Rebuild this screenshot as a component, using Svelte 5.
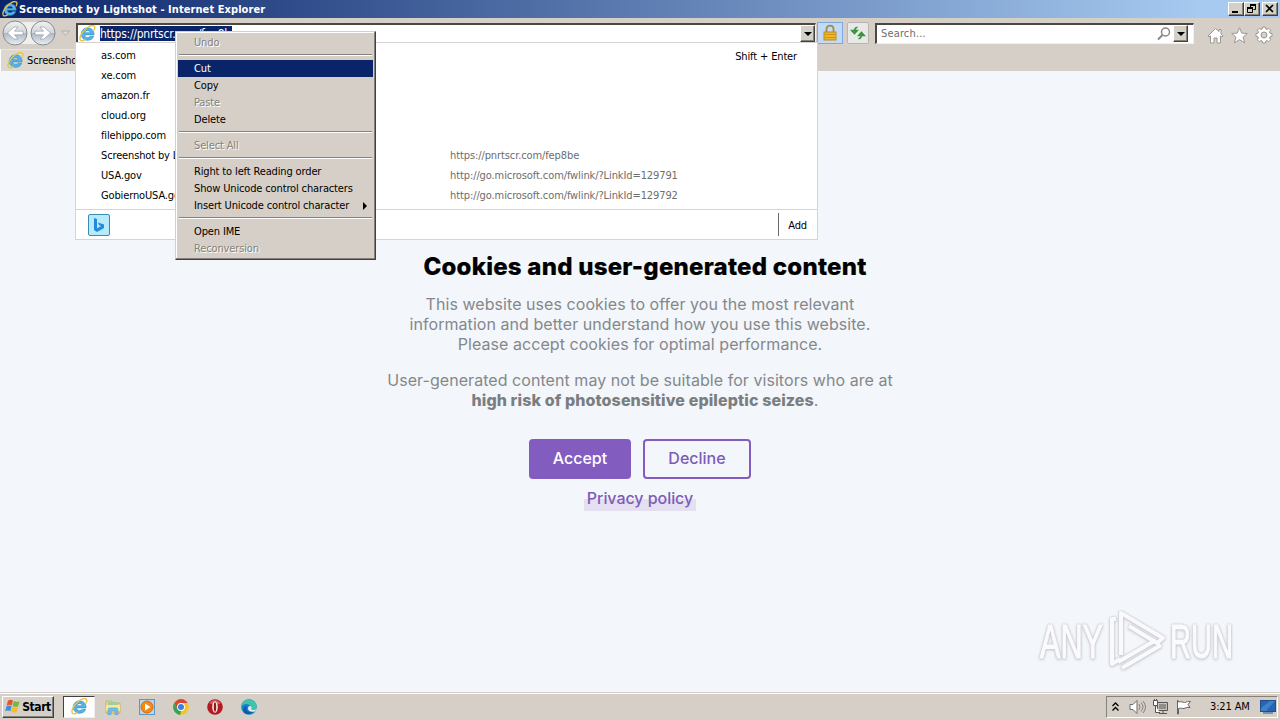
<script lang="ts">
  interface Suggestion {
    title: string;
    url?: string;
  }

  interface MenuItem {
    label: string;
    disabled?: boolean;
    active?: boolean;
    submenu?: boolean;
  }

  const suggestions: Suggestion[] = [
    { title: 'as.com' },
    { title: 'xe.com' },
    { title: 'amazon.fr' },
    { title: 'cloud.org' },
    { title: 'filehippo.com' },
    { title: 'Screenshot by Lightshot', url: 'https://pnrtscr.com/fep8be' },
    { title: 'USA.gov', url: 'http://go.microsoft.com/fwlink/?LinkId=129791' },
    { title: 'GobiernoUSA.gov', url: 'http://go.microsoft.com/fwlink/?LinkId=129792' }
  ];

  // Each group is divided from the next by an etched line
  const menuGroups: MenuItem[][] = [
    [{ label: 'Undo', disabled: true }],
    [
      { label: 'Cut', active: true },
      { label: 'Copy' },
      { label: 'Paste', disabled: true },
      { label: 'Delete' }
    ],
    [{ label: 'Select All', disabled: true }],
    [
      { label: 'Right to left Reading order' },
      { label: 'Show Unicode control characters' },
      { label: 'Insert Unicode control character', submenu: true }
    ],
    [{ label: 'Open IME' }, { label: 'Reconversion', disabled: true }]
  ];
</script>

{#snippet ieIcon(size: number)}
  <svg width={size} height={size} viewBox="0 0 16 16">
    <path d="M14.200 9.300H5.300c.1 1.500 1.200 2.400 2.800 2.400 1.200 0 2-.4 2.400-1.100h3.300c-.7 2.400-2.800 3.800-5.700 3.800-3.600 0-6-2.400-6-5.700s2.500-6 6-6c3.700 0 6.200 2.600 6.100 6.600zM5.400 7.200h5.300c-.2-1.200-1.200-1.900-2.600-1.900s-2.400.7-2.700 1.900z" fill="#55b4e6" stroke="#2c83bd" stroke-width=".5" />
    <path d="M14 5.200c1.200-2.200 1.100-3.700.1-4.300C12.200-.2 8 1.700 4.800 5.100 1.700 8.400.1 12.600 1.300 14.300c.8 1.100 2.700.6 4.800-.8" fill="none" stroke="#e6c34d" stroke-width="1.300" />
  </svg>
{/snippet}

<div class="screen">
  <div class="titlebar">
    {@render ieIcon(16)}
    <span class="title">Screenshot by Lightshot - Internet Explorer</span>
    <div class="window-buttons">
      <button aria-label="Minimize"><svg width="12" height="10"><path d="M2 7h6v2H2z" /></svg></button>
      <button aria-label="Restore">
        <svg width="12" height="10"><path d="M4.500 1.500h5v4h-2M4.500 1v3M1.500 4.500h5v4h-5z" fill="none" stroke="#000" /><path d="M4 0h6v2H4zM1 3h6v2H1z" /></svg>
      </button>
      <button class="close" aria-label="Close"><svg width="12" height="10"><path d="M2 1l7 7M9 1L2 8" stroke="#000" stroke-width="1.700" /></svg></button>
    </div>
  </div>

  <div class="toolbar">
    <div class="nav">
      <svg width="72" height="30" viewBox="0 0 72 30">
        <defs>
          <linearGradient id="glass" x1="0" y1="0" x2="0" y2="1">
            <stop offset="0" stop-color="#f0f1f2" />
            <stop offset=".49" stop-color="#d3d7db" />
            <stop offset=".5" stop-color="#aeb6bf" />
            <stop offset="1" stop-color="#e9f0f6" />
          </linearGradient>
        </defs>
        <rect x="3" y="4" width="52" height="22" rx="11" fill="#f0efed" />
        <circle cx="15" cy="15" r="12" fill="url(#glass)" stroke="#858b92" />
        <circle cx="43" cy="15" r="12" fill="url(#glass)" stroke="#858b92" />
        <path d="M23 13.200h-8.500l3.500-4.200h-4L7.500 15l6.500 6h4l-3.500-4.200H23zM35 13.200h8.500L40 9h4l6.500 6-6.500 6h-4l3.500-4.200H35z" fill="#fff" stroke="#8c969f" stroke-width=".6" />
        <path d="M61.500 13h8l-4 4.500z" fill="#dedbd6" stroke="#aaa69f" stroke-width=".8" />
      </svg>
    </div>
    <div class="field address">
      {@render ieIcon(17)}
      <span class="selection">https://pnrtscr.com/fep8be</span>
      <button class="drop" aria-label="Show history"><i></i></button>
    </div>
    <button class="tool secure" aria-label="Security report">
      <svg width="16" height="18" viewBox="0 0 16 18">
        <path d="M4.500 9V5c0-4.500 7-4.500 7 0v4" fill="none" stroke="#a88a42" stroke-width="1.800" />
        <rect x="2" y="8" width="12" height="8" fill="#efb52b" stroke="#bd8b1a" />
        <path d="M3 10.500h10M3 13.500h10" stroke="#cb9620" />
      </svg>
    </button>
    <button class="tool refresh" aria-label="Refresh">
      <svg width="16" height="16" viewBox="0 0 16 16">
        <path d="M7.500 2.200Q4.500 2.500 4.500 6M1.500 5.500l3 3.300 3-3.300z" fill="#3fa347" stroke="#379340" stroke-width="1.300" />
        <path d="M8.500 13.800q3-.3 3-3.800M8.500 10.500l3-3.300 3 3.300z" fill="#3fa347" stroke="#379340" stroke-width="1.300" />
      </svg>
    </button>
    <div class="field search">
      <span>Search...</span>
      <svg width="14" height="14" viewBox="0 0 14 14">
        <circle cx="8.500" cy="5" r="4" fill="none" stroke="#8a8783" stroke-width="1.500" />
        <path d="M5.500 8L1 12.500" stroke="#8a8783" stroke-width="2" />
      </svg>
      <button class="drop" aria-label="Search options"><i></i></button>
    </div>
    <div class="commands">
      <svg width="17" height="17" viewBox="0 0 17 17"><path d="M8.500 1.500L1 9l1 1 1.500-1v7H7v-5h3v5h3.500V9l1.500 1 1-1-2-2V2.500h-2v2z" /></svg>
      <svg width="17" height="17" viewBox="0 0 17 17"><path d="M8.500.8l2.300 5.300 5.500.4-4.200 3.600 1.500 5.700-5.100-3.100-5.100 3.100 1.500-5.700L.7 6.500l5.500-.4z" /></svg>
      <svg width="18" height="18" viewBox="0 0 18 18">
        <path fill-rule="evenodd" d="M7.500 1h3l.3 2 1.200.5 1.700-1.200 2 2-1.200 1.700.5 1.200 2 .3v3l-2 .3-.5 1.200 1.200 1.700-2 2-1.700-1.200-1.200.5-.3 2h-3l-.3-2-1.200-.5-1.700 1.200-2-2 1.200-1.700-.5-1.200-2-.3v-3l2-.3.5-1.200-1.200-1.700 2-2L6 3.500 7.200 3zM9 6a3 3 0 100 6 3 3 0 000-6z" />
      </svg>
    </div>
  </div>

  <div class="tabs">
    <div class="tab">
      {@render ieIcon(17)}
      <span>Screenshot by Lightshot</span>
    </div>
  </div>

  <main class="page">
    <h1>Cookies and user-generated content</h1>
    <p>
      This website uses cookies to offer you the most relevant<br />
      information and better understand how you use this website.<br />
      Please accept cookies for optimal performance.
    </p>
    <p>
      User-generated content may not be suitable for visitors who are at<br />
      <span class="shift"><b>high risk of photosensitive epileptic seizes</b>.</span>
    </p>
    <div class="choices">
      <button class="accept">Accept</button>
      <button class="decline">Decline</button>
    </div>
    <a class="policy" href="#privacy">Privacy policy</a>

    <svg class="watermark" width="208" height="66" viewBox="0 0 208 66">
      <g font-family="'Liberation Sans Narrow', 'Liberation Sans', sans-serif" font-size="48" fill="#fbfbfd" stroke="#fbfbfd" stroke-width="1.200">
        <text x="2" y="49" textLength="63" lengthAdjust="spacingAndGlyphs">ANY</text>
        <text x="132" y="49" textLength="63" lengthAdjust="spacingAndGlyphs">RUN</text>
      </g>
      <g fill="none" stroke="#fafafd" stroke-width="4" stroke-linejoin="round">
        <path d="M83 46V4l42 25-6 5-28-17M78 10h-4v45l8-5M80 53l38-22M84 59l39-23" />
      </g>
    </svg>
  </main>

  <div class="taskbar">
    <button class="start">
      <svg width="17" height="17" viewBox="0 0 17 17">
        <path d="M3 2.500c2-1 3.500-.8 5 .1L6.800 7.500c-1.600-1-3.200-1-5.100-.1z" fill="#e5552b" />
        <path d="M8.800 3.100c2 1 3.800 1 5.800.1l-1.300 5c-2 .9-4 .7-5.700-.3z" fill="#76b83f" />
        <path d="M1.500 8.200c1.900-.9 3.500-.8 5.100.1l-1.300 5c-1.600-1-3.200-1-5.100-.1z" fill="#3c8fda" />
        <path d="M7.400 8.800c1.900 1 3.800 1.100 5.700.2l-1.300 5c-2 .9-3.900.8-5.700-.3z" fill="#f4bd29" />
      </svg>
      Start
    </button>
    <div class="apps">
      <div class="app running">{@render ieIcon(17)}</div>
      <div class="app">
        <svg width="18" height="18" viewBox="0 0 18 18">
          <path d="M2 3h6l1 2h7v10H2z" fill="#eed483" stroke="#c7a74d" stroke-width=".7" />
          <path d="M4 4h10v4H4z" fill="#9bd199" /><path d="M2 7h14v6H2z" fill="#f7e5a2" />
          <path d="M4 16.500V12q0-2 2-2h6q2 0 2 2v4.500h-3V13H7v3.500z" fill="#74bfe3" stroke="#4d9bc6" stroke-width=".6" />
        </svg>
      </div>
      <div class="app">
        <svg width="18" height="18" viewBox="0 0 18 18">
          <rect x="1.500" y="1.500" width="15" height="15" fill="#b8d7ee" stroke="#5e97c4" />
          <circle cx="9" cy="9" r="6" fill="#f18b16" stroke="#d76b08" /><path d="M7 5.500l5.500 3.500L7 12.500z" fill="#fff" />
        </svg>
      </div>
      <div class="app">
        <svg width="18" height="18" viewBox="0 0 18 18">
          <circle cx="9" cy="9" r="7.900" fill="#f4c52b" />
          <path d="M2.200 5A7.900 7.900 0 0115.800 5H9L5.800 10.900z" fill="#dc4534" />
          <path d="M2.200 5l3.600 5.900L9 12.800l-.8 4.100A7.900 7.900 0 012.200 5z" fill="#35a353" />
          <circle cx="9" cy="9" r="3.900" fill="#fff" /><circle cx="9" cy="9" r="3" fill="#397fe4" />
        </svg>
      </div>
      <div class="app">
        <svg width="18" height="18" viewBox="0 0 18 18">
          <circle cx="9" cy="9" r="7.800" fill="#b71920" /><path d="M3 5q6-6 12 0-5 3-12 0" fill="#d75c5d" />
          <ellipse cx="9" cy="9" rx="2.800" ry="5.800" fill="#f5f0ef" /><ellipse cx="9" cy="9" rx="1.200" ry="4.800" fill="#8e1b1e" />
        </svg>
      </div>
      <div class="app">
        <svg width="18" height="18" viewBox="0 0 18 18">
          <circle cx="9" cy="9" r="7.800" fill="#1686cf" />
          <path d="M1.300 8A7.800 7.800 0 0116.800 9c0 3-4 3.500-6 2.300C12 7 7 4 1.300 8z" fill="#40c3ab" />
          <path d="M7.500 8c-3 3 .5 7 5.500 6-4 4-10 2-9.800-2.500C3.400 9 5.500 8 7.500 8z" fill="#125ba9" />
          <path d="M9.500 8c2 0 2.500 1.500 1.500 3 1.500 1.500 4.500 1 6-.5-.5 2-2 3-4 3.200-5 .2-6.500-4-3.500-5.700z" fill="#e0edef" />
        </svg>
      </div>
    </div>
    <div class="tray">
      <svg class="chevrons" width="7" height="10" viewBox="0 0 7 10"><path d="M.5 4l3-3 3 3M.5 8.500l3-3 3 3" /></svg>
      <svg width="18" height="16" viewBox="0 0 18 16">
        <path d="M1 5.500h3l4-4v13l-4-4H1z" fill="#fff" stroke="#6f6d6a" />
        <path d="M10 5q2 3 0 6M12 3.500q4 4.500 0 9M14 2q5 6 0 12" fill="none" stroke="#85827e" />
      </svg>
      <svg width="17" height="16" viewBox="0 0 17 16">
        <path d="M5.500 3.500h10v8h-10zM7 14.500h8M11 12v2" fill="#c7c5c1" stroke="#575553" />
        <path d="M7 5h7v5H7z" fill="#8f8d8a" />
        <path d="M1.500 1.500h4v5h-4zM3.500 7v6.500H8M2.500 0v2M4.500 0v2" fill="#fff" stroke="#575553" />
      </svg>
      <svg width="16" height="16" viewBox="0 0 16 16"><path d="M1.500 1v14h1V9.500c3-1 4 .5 5.500 0s3-1.500 6-1l-2-3 2.500-3c-4-.5-4 1-6 1s-2.500-1.500-6-.5z" fill="#fff" stroke="#666461" /></svg>
      <span class="clock">3:21 AM</span>
      <svg class="desktop" width="16" height="14" viewBox="0 0 16 14"><rect x=".5" y=".5" width="15" height="11" fill="#2365b8" stroke="#214f87" /><path d="M1 8L10 1h5L6 11H1z" fill="#417fc9" /><path d="M3 12h10v2H3z" fill="#7992a9" /></svg>
    </div>
  </div>

  <div class="suggestions">
    <span class="shortcut">Shift + Enter</span>
    <div class="suggestion-list">
      {#each suggestions as item}
        <div class="suggestion">
          <span class="name">{item.title}</span>
          {#if item.url}<span class="url">{item.url}</span>{/if}
        </div>
      {/each}
    </div>
    <div class="suggestion-footer">
      <div class="bing">
        <svg width="12" height="16" viewBox="0 0 12 16"><path d="M1 1l3 1v9.500l4-2.500-2-1-1-2.500 6 2v3.500L4 15l-3-2z" fill="#2488dd" /></svg>
      </div>
      <button class="add">Add</button>
    </div>
  </div>

  <div class="context-menu">
    {#each menuGroups as group}
      <div class="group">
        {#each group as item}
          <div class="item" class:disabled={item.disabled} class:active={item.active}>
            <span>{item.label}</span>
            {#if item.submenu}<i></i>{/if}
          </div>
        {/each}
      </div>
    {/each}
  </div>
</div>

<style>
  :global(body) {
    margin: 0;
    overflow: hidden;
  }

  .screen {
    position: relative;
    display: flex;
    flex-direction: column;
    width: 1280px;
    height: 720px;
    overflow: hidden;
    background: #d5cfc7;
    color: #000;
    font: 11px/14px 'DejaVu Sans Condensed', 'DejaVu Sans', sans-serif;
    font-stretch: condensed;
    letter-spacing: -0.14px;
  }

  .screen * {
    box-sizing: border-box;
  }

  svg {
    display: block;
    flex: none;
  }

  button {
    display: flex;
    align-items: center;
    justify-content: center;
    padding: 0;
    border: 0;
    font: inherit;
    letter-spacing: inherit;
    color: inherit;
    background: none;
  }

  .titlebar {
    display: flex;
    align-items: center;
    gap: 1px;
    height: 18px;
    padding: 0 2px;
    background: linear-gradient(90deg, #0a246a, #a6caf0 94%);
  }

  .title {
    flex: 1;
    padding-top: 1px;
    color: #fff;
    font-weight: bold;
    letter-spacing: 0.07px;
  }

  .window-buttons {
    display: flex;
  }

  .window-buttons button,
  .drop {
    width: 16px;
    height: 14px;
    background: #d4d0c8;
    border: 1px solid;
    border-color: #fff #404040 #404040 #fff;
    box-shadow: inset -1px -1px #85817b;
  }

  .window-buttons .close {
    margin-left: 2px;
  }

  .toolbar {
    display: flex;
    align-items: flex-start;
    height: 31px;
  }

  .nav {
    width: 76px;
  }

  .field {
    display: flex;
    align-items: center;
    height: 21px;
    margin-top: 5px;
    background: #fff;
    border: 1px solid #7d7871;
    border-top: 2px solid #4b4742;
    border-left: 2px solid #4b4742;
    border-right-color: #f2f0ed;
    border-bottom-color: #f2f0ed;
  }

  .address {
    width: 740px;
    padding: 0 0 1px 1px;
  }

  .selection {
    margin-left: 4px;
    height: 15px;
    width: 132px;
    padding-top: 1px;
    color: #fff;
    background: #0a246a;
    font-size: 12px;
    letter-spacing: -0.25px;
    white-space: nowrap;
  }

  .drop {
    width: 15px;
    height: 17px;
  }

  .address .drop {
    margin-left: auto;
  }

  .drop i {
    border: 4px solid transparent;
    border-top-color: #000;
    border-bottom: 0;
  }

  .tool {
    height: 22px;
    margin-top: 4px;
    border: 1px solid #b8b5b0;
  }

  .secure {
    width: 26px;
    margin-left: 1px;
    background: #c2daf6;
    border-color: #7caae0;
  }

  .refresh {
    width: 22px;
    margin-left: 4px;
    background: #e8e8e6;
    border-radius: 2px;
  }

  .search {
    width: 319px;
    margin-left: 6px;
    padding: 0 5px 1px 0;
    color: #6f6d69;
  }

  .search span {
    flex: 1;
    margin-left: 4px;
    padding-top: 1px;
    letter-spacing: 0.15px;
  }

  .search .drop {
    margin-left: 2px;
  }

  .commands {
    display: flex;
    align-items: center;
    gap: 7px;
    margin: 8px 0 0 13px;
  }

  .commands svg {
    fill: #fff;
    stroke: #9a9794;
  }

  .tabs {
    height: 22px;
  }

  .tab {
    display: flex;
    align-items: center;
    gap: 3px;
    width: 166px;
    height: 22px;
    padding-left: 6px;
    background: #dcd7cf;
    border-top: 1px solid #e9e6e1;
    border-left: 1px solid #fff;
  }

  .page {
    position: relative;
    display: flex;
    flex-direction: column;
    align-items: center;
    height: 621px;
    padding-top: 182px;
    background: #f3f6fa;
    color: #85888a;
    font: 400 16px/20px Inter, sans-serif;
    letter-spacing: 0;
    text-align: center;
  }

  h1 {
    margin: 0 0 13px 10px;
    color: #000;
    font-size: 24px;
    line-height: 28px;
    font-weight: 800;
    letter-spacing: 0.24px;
    -webkit-text-stroke: 0.2px #000;
  }

  p {
    margin: 0 0 16px;
    letter-spacing: 0.055px;
  }

  .shift {
    margin-left: 10px;
  }

  b {
    color: #7b7e80;
    font-weight: 800;
    letter-spacing: 0.11px;
  }

  .choices {
    display: flex;
    gap: 12px;
    margin-top: 13px;
    font-weight: 500;
  }

  .choices button {
    height: 40px;
    padding-bottom: 2px;
    border: 2px solid #835cc0;
    border-radius: 4px;
  }

  .accept {
    width: 102px;
    color: #fff;
    background: #835cc0;
  }

  .decline {
    width: 108px;
    color: #7e5bb7;
  }

  .policy {
    height: 22px;
    margin-top: 10px;
    padding: 0 3px;
    color: #7e5bb7;
    font-weight: 500;
    line-height: 19px;
    letter-spacing: -0.05px;
    text-decoration: none;
    background: linear-gradient(transparent 45%, #e5dff2 45%);
  }

  .watermark {
    position: absolute;
    left: 1038px;
    top: 538px;
    filter: drop-shadow(0 0 1px #bfc0c7) drop-shadow(0 1px 1px #d2d2da);
  }

  .taskbar {
    display: flex;
    align-items: center;
    height: 28px;
    padding: 1px 2px 1px;
    border-top: 1px solid #d5cfc7;
    box-shadow: inset 0 1px #fff;
  }

  .start {
    width: 52px;
    height: 22px;
    border: 1px solid;
    border-color: #fff #404040 #404040 #fff;
    box-shadow: inset -1px -1px #85817b;
    font-weight: bold;
    font-size: 12px;
    letter-spacing: -0.45px;
  }

  .apps {
    display: flex;
    margin-left: 9px;
  }

  .app {
    display: flex;
    align-items: center;
    justify-content: center;
    width: 34px;
    height: 22px;
  }

  .running {
    width: 32px;
    margin-right: 1px;
    background: #fff;
    border: 1px solid;
    border-color: #404040 #f1efec #f1efec #404040;
  }

  .tray {
    display: flex;
    align-items: center;
    width: 172px;
    height: 22px;
    margin-left: auto;
    padding-left: 5px;
    border: 1px solid;
    border-color: #85817b #fff #fff #85817b;
  }

  .chevrons {
    margin-right: 10px;
    fill: none;
    stroke: #000;
    stroke-width: 1.3;
  }

  .tray svg:nth-of-type(3) {
    margin: 0 7px 0 5px;
  }

  .clock {
    margin-left: 18px;
    padding-top: 1px;
  }

  .desktop {
    margin-left: 10px;
  }

  .suggestions {
    position: absolute;
    left: 75px;
    top: 42px;
    width: 743px;
    height: 198px;
    background: #fff;
    border: 1px solid #d7d3ce;
  }

  .suggestion-list {
    height: 166px;
    padding-top: 3px;
  }

  .suggestion {
    display: flex;
    align-items: center;
    height: 20px;
    padding-left: 25px;
    white-space: nowrap;
  }

  .name {
    width: 349px;
  }

  .url {
    color: #6d6d6d;
    letter-spacing: -0.1px;
  }

  .shortcut {
    position: absolute;
    right: 20px;
    top: 7px;
  }

  .suggestion-footer {
    display: flex;
    align-items: center;
    justify-content: space-between;
    height: 30px;
    padding: 0 10px 0 12px;
    border-top: 1px solid #d7d3ce;
  }

  .bing {
    display: flex;
    align-items: center;
    justify-content: center;
    width: 22px;
    height: 22px;
    background: #b5ebfc;
    border: 1px solid #398cae;
    border-radius: 2px;
  }

  .add {
    height: 23px;
    padding: 2px 0 0 9px;
    border-left: 1px solid #696969;
  }

  .context-menu {
    position: absolute;
    left: 175px;
    top: 31px;
    width: 201px;
    height: 229px;
    padding: 2px;
    background: #d5cfc7;
    border: 1px solid;
    border-color: #d5cfc7 #404040 #404040 #d5cfc7;
    box-shadow: inset -1px -1px #85817b, inset 1px 1px #fff;
  }

  .group + .group {
    padding-top: 9px;
    background: linear-gradient(#85817b, #85817b) 1px 3px / 193px 1px no-repeat,
      linear-gradient(#fff, #fff) 1px 4px / 193px 1px no-repeat;
  }

  .item {
    display: flex;
    align-items: center;
    justify-content: space-between;
    height: 17px;
    padding: 0 6px 0 16px;
    white-space: nowrap;
  }

  .item i {
    border: 4px solid transparent;
    border-left: 4px solid #000;
    border-right: 0;
  }

  .disabled {
    color: #85817b;
    text-shadow: 1px 1px #fff;
  }

  .active {
    color: #fff;
    background: #0a246a;
  }
</style>
